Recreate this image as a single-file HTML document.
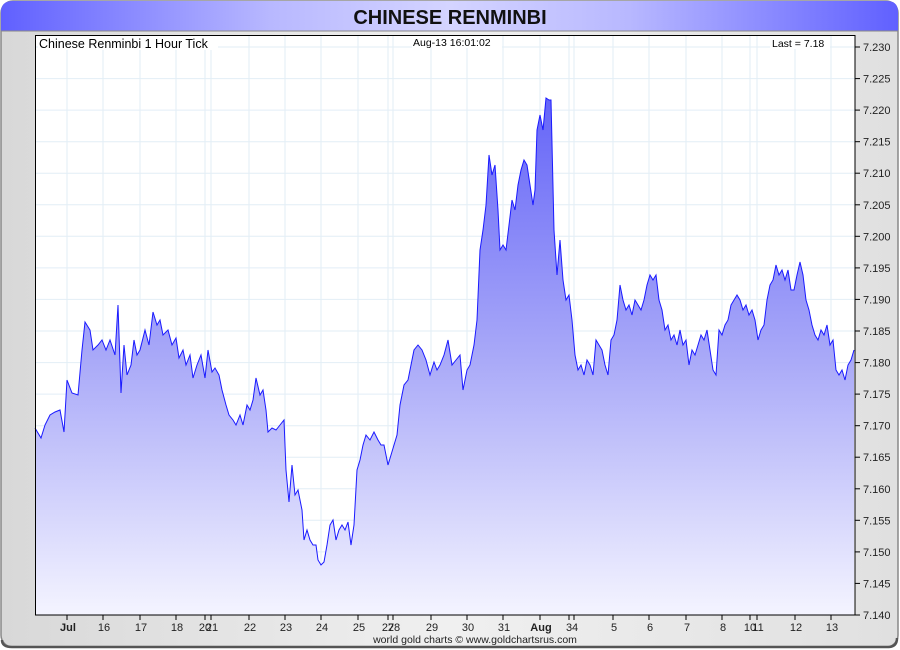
<!DOCTYPE html>
<html><head><meta charset="utf-8"><style>
html,body{margin:0;padding:0;background:#fff;}
svg{display:block;font-family:"Liberation Sans",sans-serif;}
</style></head><body>
<svg width="900" height="650" viewBox="0 0 900 650" xmlns="http://www.w3.org/2000/svg">
<defs>
<linearGradient id="hdr" x1="0" x2="1" y1="0" y2="0">
<stop offset="0" stop-color="#6060ff"/><stop offset="0.3" stop-color="#b8b8ff"/><stop offset="0.5" stop-color="#d4d4ff"/><stop offset="0.7" stop-color="#b8b8ff"/><stop offset="1" stop-color="#6060ff"/>
</linearGradient>
<linearGradient id="bg" x1="0" x2="1" y1="0" y2="0">
<stop offset="0" stop-color="#d8d8d8"/><stop offset="0.5" stop-color="#f0f0f0"/><stop offset="1" stop-color="#e0e0e0"/>
</linearGradient>
<linearGradient id="fill" gradientUnits="userSpaceOnUse" x1="0" y1="95" x2="0" y2="615">
<stop offset="0" stop-color="#6464f8"/><stop offset="0.5" stop-color="#a8a8f8"/><stop offset="1" stop-color="#f4f4ff"/>
</linearGradient>
</defs>
<rect x="1" y="1" width="897" height="646" rx="12" fill="url(#bg)" stroke="#888" stroke-width="1.5"/>
<path d="M2,640 Q2,647 12,647 L888,647 Q897,647 897,638" fill="none" stroke="#555" stroke-width="2.5"/>
<path d="M13,1 L887,1 Q898,1 898,12 L898,31 L1,31 L1,12 Q1,1 13,1 Z" fill="url(#hdr)"/>
<line x1="1" y1="31" x2="898" y2="31" stroke="#888"/>
<text x="450" y="24" text-anchor="middle" font-size="20" font-weight="bold" fill="#111">CHINESE RENMINBI</text>
<rect x="35" y="35" width="820" height="580" fill="#fff"/>
<g stroke="#e2eef6" stroke-width="1">
<line x1="67" y1="35" x2="67" y2="615"/><line x1="103" y1="35" x2="103" y2="615"/><line x1="140" y1="35" x2="140" y2="615"/><line x1="176" y1="35" x2="176" y2="615"/><line x1="205" y1="35" x2="205" y2="615"/><line x1="211" y1="35" x2="211" y2="615"/><line x1="249" y1="35" x2="249" y2="615"/><line x1="285" y1="35" x2="285" y2="615"/><line x1="321" y1="35" x2="321" y2="615"/><line x1="358" y1="35" x2="358" y2="615"/><line x1="388" y1="35" x2="388" y2="615"/><line x1="393" y1="35" x2="393" y2="615"/><line x1="431" y1="35" x2="431" y2="615"/><line x1="467" y1="35" x2="467" y2="615"/><line x1="503" y1="35" x2="503" y2="615"/><line x1="540" y1="35" x2="540" y2="615"/><line x1="569" y1="35" x2="569" y2="615"/><line x1="574" y1="35" x2="574" y2="615"/><line x1="613" y1="35" x2="613" y2="615"/><line x1="649" y1="35" x2="649" y2="615"/><line x1="686" y1="35" x2="686" y2="615"/><line x1="722" y1="35" x2="722" y2="615"/><line x1="750" y1="35" x2="750" y2="615"/><line x1="757" y1="35" x2="757" y2="615"/><line x1="795" y1="35" x2="795" y2="615"/><line x1="831" y1="35" x2="831" y2="615"/>
<line x1="35" y1="47" x2="855" y2="47"/><line x1="35" y1="78.6" x2="855" y2="78.6"/><line x1="35" y1="110.1" x2="855" y2="110.1"/><line x1="35" y1="141.7" x2="855" y2="141.7"/><line x1="35" y1="173.2" x2="855" y2="173.2"/><line x1="35" y1="204.8" x2="855" y2="204.8"/><line x1="35" y1="236.3" x2="855" y2="236.3"/><line x1="35" y1="267.9" x2="855" y2="267.9"/><line x1="35" y1="299.4" x2="855" y2="299.4"/><line x1="35" y1="331" x2="855" y2="331"/><line x1="35" y1="362.6" x2="855" y2="362.6"/><line x1="35" y1="394.1" x2="855" y2="394.1"/><line x1="35" y1="425.7" x2="855" y2="425.7"/><line x1="35" y1="457.2" x2="855" y2="457.2"/><line x1="35" y1="488.8" x2="855" y2="488.8"/><line x1="35" y1="520.3" x2="855" y2="520.3"/><line x1="35" y1="551.9" x2="855" y2="551.9"/><line x1="35" y1="583.4" x2="855" y2="583.4"/>
</g>
<polygon fill="url(#fill)" points="35,615 35,428 41,438 45,425 50,415 55,412 60,410 64,432 67,380 72,393 78,395 82,350 85,322 90,330 93,350 98,345 102,340 106,350 110,340 115,355 118,305 121,393 124,345 127,375 131,365 134,340 137,355 140,350 145,330 149,345 153,312 157,325 160,320 163,335 168,330 172,345 176,338 179,358 183,350 186,365 190,355 193,378 197,365 201,355 205,378 208,350 212,372 215,368 219,375 222,390 226,405 229,415 233,420 236,425 240,415 243,425 247,405 250,410 253,400 256,378 260,395 263,390 266,410 268,432 272,428 276,430 280,425 284,420 286,470 289,502 292,465 295,495 298,490 302,510 304,540 307,530 310,540 313,545 316,545 318,560 321,565 324,562 327,545 330,525 333,520 336,540 339,530 342,525 345,530 348,522 351,545 354,525 357,470 360,460 363,445 366,435 370,440 374,432 378,440 381,445 384,445 388,465 391,455 394,445 397,435 400,405 404,385 408,380 411,365 414,350 418,345 422,350 426,360 430,375 434,362 437,370 440,365 444,355 448,340 452,365 456,360 460,355 463,390 467,370 470,365 474,345 477,320 480,250 483,230 486,205 489,155 492,175 495,165 498,210 500,250 503,245 506,250 509,225 512,200 515,210 518,185 521,170 524,160 527,165 530,185 533,205 535,190 537,130 540,115 543,130 546,98 549,100 551,100 554,230 557,275 560,240 563,280 566,300 569,295 572,320 575,355 578,370 581,365 584,375 587,360 590,365 593,375 596,340 599,345 602,350 605,365 608,375 611,340 614,335 617,320 620,285 623,300 626,310 629,305 632,315 635,300 638,305 641,310 644,300 647,285 650,275 653,280 656,275 659,300 662,310 665,330 668,325 671,340 674,335 677,345 680,330 683,345 686,340 689,365 692,350 695,355 698,345 701,335 704,340 707,330 710,350 713,370 716,375 719,330 722,335 725,325 728,320 731,305 734,300 737,295 740,300 743,310 746,305 749,315 752,310 755,320 758,340 761,330 764,325 767,300 770,285 773,280 776,265 779,275 782,270 785,280 788,270 791,290 794,290 797,275 800,262 803,275 806,300 809,310 812,325 815,335 818,340 821,330 824,335 827,325 830,345 833,340 836,370 839,375 842,370 845,380 848,365 851,360 854,350 854,615"/>
<polyline fill="none" stroke="#1a1aff" stroke-width="1" points="35,428 41,438 45,425 50,415 55,412 60,410 64,432 67,380 72,393 78,395 82,350 85,322 90,330 93,350 98,345 102,340 106,350 110,340 115,355 118,305 121,393 124,345 127,375 131,365 134,340 137,355 140,350 145,330 149,345 153,312 157,325 160,320 163,335 168,330 172,345 176,338 179,358 183,350 186,365 190,355 193,378 197,365 201,355 205,378 208,350 212,372 215,368 219,375 222,390 226,405 229,415 233,420 236,425 240,415 243,425 247,405 250,410 253,400 256,378 260,395 263,390 266,410 268,432 272,428 276,430 280,425 284,420 286,470 289,502 292,465 295,495 298,490 302,510 304,540 307,530 310,540 313,545 316,545 318,560 321,565 324,562 327,545 330,525 333,520 336,540 339,530 342,525 345,530 348,522 351,545 354,525 357,470 360,460 363,445 366,435 370,440 374,432 378,440 381,445 384,445 388,465 391,455 394,445 397,435 400,405 404,385 408,380 411,365 414,350 418,345 422,350 426,360 430,375 434,362 437,370 440,365 444,355 448,340 452,365 456,360 460,355 463,390 467,370 470,365 474,345 477,320 480,250 483,230 486,205 489,155 492,175 495,165 498,210 500,250 503,245 506,250 509,225 512,200 515,210 518,185 521,170 524,160 527,165 530,185 533,205 535,190 537,130 540,115 543,130 546,98 549,100 551,100 554,230 557,275 560,240 563,280 566,300 569,295 572,320 575,355 578,370 581,365 584,375 587,360 590,365 593,375 596,340 599,345 602,350 605,365 608,375 611,340 614,335 617,320 620,285 623,300 626,310 629,305 632,315 635,300 638,305 641,310 644,300 647,285 650,275 653,280 656,275 659,300 662,310 665,330 668,325 671,340 674,335 677,345 680,330 683,345 686,340 689,365 692,350 695,355 698,345 701,335 704,340 707,330 710,350 713,370 716,375 719,330 722,335 725,325 728,320 731,305 734,300 737,295 740,300 743,310 746,305 749,315 752,310 755,320 758,340 761,330 764,325 767,300 770,285 773,280 776,265 779,275 782,270 785,280 788,270 791,290 794,290 797,275 800,262 803,275 806,300 809,310 812,325 815,335 818,340 821,330 824,335 827,325 830,345 833,340 836,370 839,375 842,370 845,380 848,365 851,360 854,350"/>
<rect x="35.5" y="35.5" width="819.5" height="579.5" fill="none" stroke="#000" stroke-width="1"/>
<rect x="38" y="36" width="180" height="14" fill="#fff"/>
<rect x="412" y="36" width="90" height="12" fill="#fff"/>
<rect x="770" y="36" width="60" height="13" fill="#fff"/>
<text x="39" y="48" font-size="12.5" fill="#000">Chinese Renminbi 1 Hour Tick</text>
<text x="413" y="46" font-size="10.5" fill="#000">Aug-13  16:01:02</text>
<text x="772" y="47" font-size="10.5" fill="#000">Last = 7.18</text>
<g stroke="#000"><line x1="855" y1="47" x2="860" y2="47"/><line x1="855" y1="78.6" x2="860" y2="78.6"/><line x1="855" y1="110.1" x2="860" y2="110.1"/><line x1="855" y1="141.7" x2="860" y2="141.7"/><line x1="855" y1="173.2" x2="860" y2="173.2"/><line x1="855" y1="204.8" x2="860" y2="204.8"/><line x1="855" y1="236.3" x2="860" y2="236.3"/><line x1="855" y1="267.9" x2="860" y2="267.9"/><line x1="855" y1="299.4" x2="860" y2="299.4"/><line x1="855" y1="331" x2="860" y2="331"/><line x1="855" y1="362.6" x2="860" y2="362.6"/><line x1="855" y1="394.1" x2="860" y2="394.1"/><line x1="855" y1="425.7" x2="860" y2="425.7"/><line x1="855" y1="457.2" x2="860" y2="457.2"/><line x1="855" y1="488.8" x2="860" y2="488.8"/><line x1="855" y1="520.3" x2="860" y2="520.3"/><line x1="855" y1="551.9" x2="860" y2="551.9"/><line x1="855" y1="583.4" x2="860" y2="583.4"/><line x1="855" y1="615" x2="860" y2="615"/></g>
<g font-size="11" fill="#222">
<text x="863" y="51">7.230</text><text x="863" y="82.6">7.225</text><text x="863" y="114.1">7.220</text><text x="863" y="145.7">7.215</text><text x="863" y="177.2">7.210</text><text x="863" y="208.8">7.205</text><text x="863" y="240.3">7.200</text><text x="863" y="271.9">7.195</text><text x="863" y="303.4">7.190</text><text x="863" y="335">7.185</text><text x="863" y="366.6">7.180</text><text x="863" y="398.1">7.175</text><text x="863" y="429.7">7.170</text><text x="863" y="461.2">7.165</text><text x="863" y="492.8">7.160</text><text x="863" y="524.3">7.155</text><text x="863" y="555.9">7.150</text><text x="863" y="587.4">7.145</text><text x="863" y="619">7.140</text>
</g>
<g stroke="#000"><line x1="67" y1="615" x2="67" y2="620"/><line x1="103" y1="615" x2="103" y2="620"/><line x1="140" y1="615" x2="140" y2="620"/><line x1="176" y1="615" x2="176" y2="620"/><line x1="205" y1="615" x2="205" y2="620"/><line x1="211" y1="615" x2="211" y2="620"/><line x1="249" y1="615" x2="249" y2="620"/><line x1="285" y1="615" x2="285" y2="620"/><line x1="321" y1="615" x2="321" y2="620"/><line x1="358" y1="615" x2="358" y2="620"/><line x1="388" y1="615" x2="388" y2="620"/><line x1="393" y1="615" x2="393" y2="620"/><line x1="431" y1="615" x2="431" y2="620"/><line x1="467" y1="615" x2="467" y2="620"/><line x1="503" y1="615" x2="503" y2="620"/><line x1="540" y1="615" x2="540" y2="620"/><line x1="569" y1="615" x2="569" y2="620"/><line x1="574" y1="615" x2="574" y2="620"/><line x1="613" y1="615" x2="613" y2="620"/><line x1="649" y1="615" x2="649" y2="620"/><line x1="686" y1="615" x2="686" y2="620"/><line x1="722" y1="615" x2="722" y2="620"/><line x1="750" y1="615" x2="750" y2="620"/><line x1="757" y1="615" x2="757" y2="620"/><line x1="795" y1="615" x2="795" y2="620"/><line x1="831" y1="615" x2="831" y2="620"/></g>
<g font-size="11" fill="#222" text-anchor="middle">
<text x="68" y="631" font-weight="bold">Jul</text><text x="104" y="631">16</text><text x="141" y="631">17</text><text x="177" y="631">18</text><text x="205" y="631">20</text><text x="212" y="631">21</text><text x="250" y="631">22</text><text x="286" y="631">23</text><text x="322" y="631">24</text><text x="359" y="631">25</text><text x="388" y="631">27</text><text x="394" y="631">28</text><text x="432" y="631">29</text><text x="468" y="631">30</text><text x="504" y="631">31</text><text x="541" y="631" font-weight="bold">Aug</text><text x="569" y="631">3</text><text x="575" y="631">4</text><text x="614" y="631">5</text><text x="650" y="631">6</text><text x="687" y="631">7</text><text x="723" y="631">8</text><text x="750" y="631">10</text><text x="758" y="631">11</text><text x="796" y="631">12</text><text x="832" y="631">13</text>
</g>
<text x="475" y="643" font-size="10.5" fill="#222" text-anchor="middle">world gold charts © www.goldchartsrus.com</text>
</svg>
</body></html>
